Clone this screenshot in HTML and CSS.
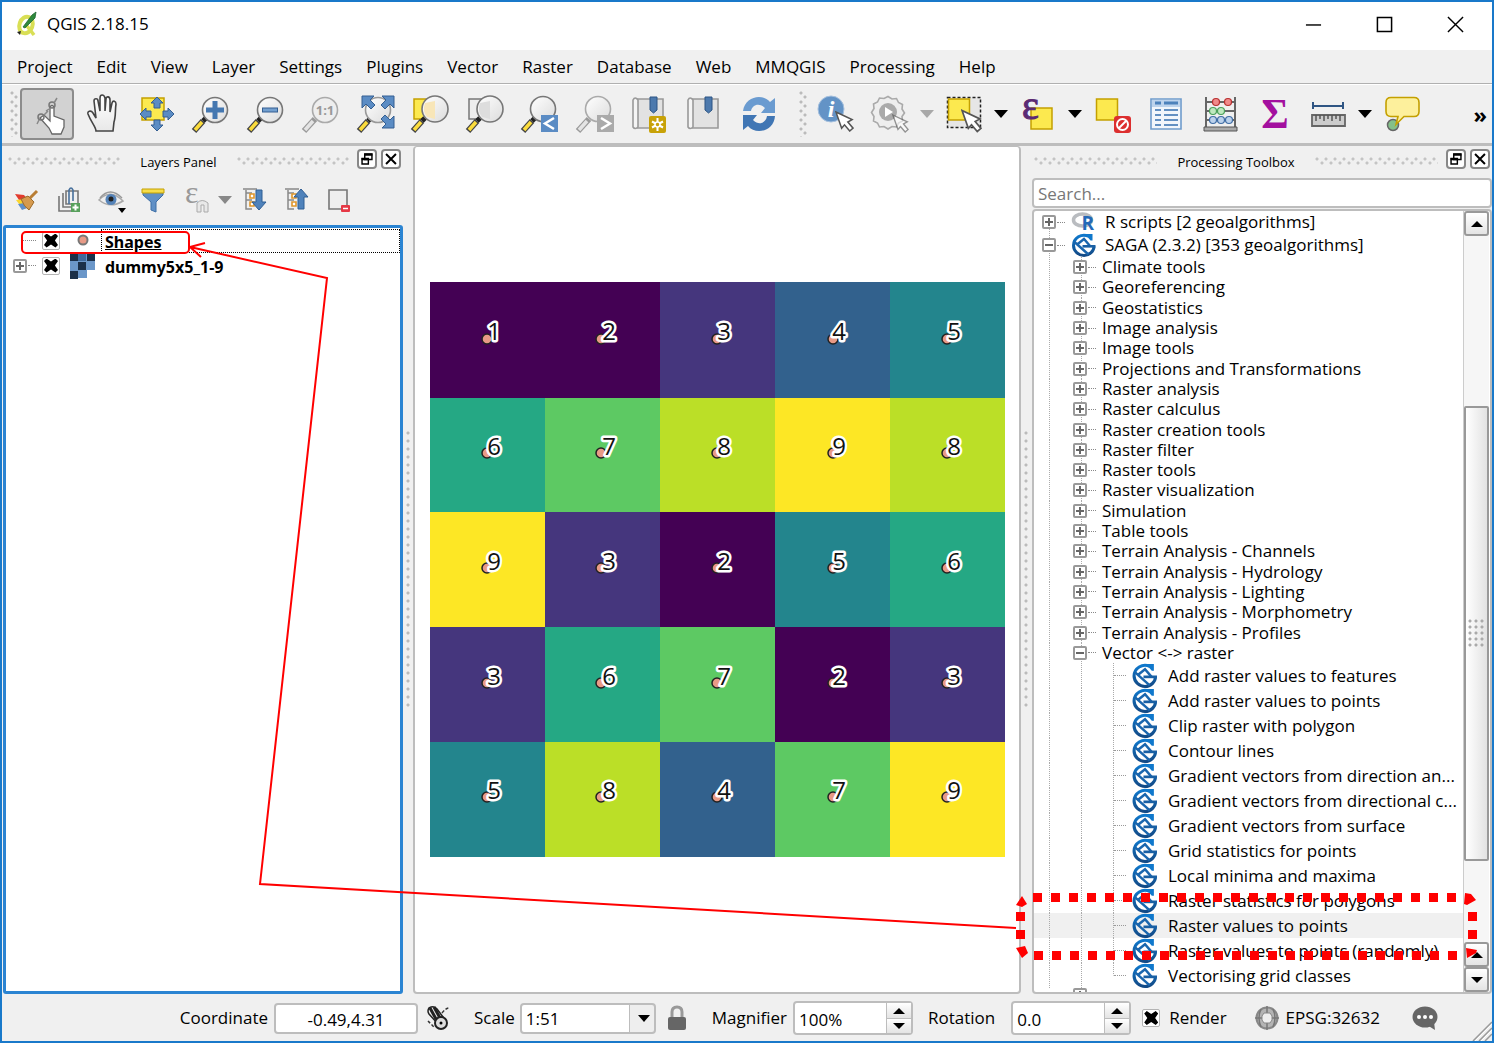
FILE: index.html
```html
<!DOCTYPE html>
<html lang="en">
<head>
<meta charset="utf-8">
<title>QGIS 2.18.15</title>
<link rel="stylesheet" href="styles.css">
</head>
<body>
<svg class="defs" width="0" height="0" aria-hidden="true">
  <defs>
    <linearGradient id="lens" x1="0" y1="0" x2="1" y2="1"><stop offset="0" stop-color="#fff"/><stop offset="1" stop-color="#dcdcdc"/></linearGradient>
    <linearGradient id="sagaBlue" x1="0" y1="0" x2="0" y2="1"><stop offset="0" stop-color="#0f78cc"/><stop offset="1" stop-color="#134a86"/></linearGradient>
    <linearGradient id="skin" x1="0" y1="0" x2="0" y2="1"><stop offset="0" stop-color="#fff"/><stop offset="1" stop-color="#e8e8e8"/></linearGradient>
  </defs>
  <symbol id="saga" viewBox="0 0 24 24">
    <path d="M17 3.200C10 0 2 5 2 12.500C2 18 7 22.500 12.500 22.500S22.500 18 22.500 13.500" fill="none" stroke="url(#sagaBlue)" stroke-width="3"/>
    <path d="M13 1h8v6.500h-2l-3-3.500z" fill="#0f78cc"/>
    <path d="M3 9L17 21.500M5 12L12.500 6L19 13.500" fill="none" stroke="#1a66ae" stroke-width="2.400"/>
    <path d="M11 13.300H24" stroke="#1a60a4" stroke-width="2.600"/>
  </symbol>
  <symbol id="handle" viewBox="0 0 40 40">
    <path d="M12 27L3 37" stroke="#444" stroke-width="6"/><path d="M11 28L4 36" stroke="#fbdc3c" stroke-width="3.500"/>
    <path d="M15 24l-3 3" stroke="#222" stroke-width="5"/>
  </symbol>
  <symbol id="handle-off" viewBox="0 0 40 40">
    <path d="M14 25L3 37" stroke="#9a9a9a" stroke-width="6"/><path d="M12 27L4 36" stroke="#e4e4e4" stroke-width="3.500"/>
  </symbol>
  <symbol id="cursor" viewBox="0 0 20 22">
    <path d="M1 1L18 9L13.500 11.500L19 18L15.500 21L10 14.500L7 18Z" fill="#fff" stroke="#555" stroke-width="1.600"/>
  </symbol>
  <symbol id="book" viewBox="0 0 40 40">
    <path d="M8 5H34V34H8z" fill="#e2e2e2" stroke="#999" stroke-width="1.600"/>
    <path d="M4 6q2-4 5 0V33q-3 3-5 0z" fill="#f4f4f4" stroke="#999" stroke-width="1.600"/>
    <path d="M21 3h7v13l-3.500 3L21 16z" fill="#4c79ad" stroke="#2c5584"/>
  </symbol>
  <symbol id="float" viewBox="0 0 20 20"><path d="M7.500 4.500h8v6h-8zM4.500 9.500h7v6h-7z" fill="#fff" stroke="#000" stroke-width="1.600"/><path d="M7 5h9M4 10h8" stroke="#000" stroke-width="2.500"/></symbol>
  <symbol id="close" viewBox="0 0 20 20"><path d="M4.500 4.500l11 11m0-11l-11 11" stroke="#000" stroke-width="2.200"/></symbol>
  <symbol id="tree-lines" viewBox="0 0 28 28">
    <path d="M5 4v19h6M5 7h6M5 14h6" fill="none" stroke="#888" stroke-width="1.500"/><path d="M2 3h14" stroke="#888" stroke-width="1.500"/>
    <path d="M9 8h4v4H9zM9 16h4v4H9z" fill="#fff" stroke="#e0962a" stroke-width="1.600"/>
  </symbol>
</svg>

<div class="window">
  <header class="titlebar">
    <svg class="logo" viewBox="0 0 22 26"><ellipse cx="10" cy="14" rx="6.500" ry="8.500" fill="none" stroke="#d9df55" stroke-width="4" transform="rotate(20 10 14)"/><path d="M11 15l7 9" stroke="#d9df55" stroke-width="3.500"/><path d="M7 16L16 4l4-3-1 6L9 17z" fill="#2f8a3c" stroke="#1d6430" stroke-width=".8"/><path d="M1 21l4-1-1 4z" fill="#222"/></svg>
    <h1>QGIS 2.18.15</h1>
    <div class="winbuttons">
      <button aria-label="Minimize"><svg viewBox="0 0 18 18"><path d="M1 9.500h16" stroke="#000" stroke-width="1.500"/></svg></button>
      <button aria-label="Maximize"><svg viewBox="0 0 18 18"><path d="M1.500 1.500h15v15h-15z" fill="none" stroke="#000" stroke-width="1.600"/></svg></button>
      <button aria-label="Close"><svg viewBox="0 0 18 18"><path d="M1 1l16 16M17 1L1 17" stroke="#000" stroke-width="1.500"/></svg></button>
    </div>
  </header>

  <nav class="menubar">
    <button>Project</button><button>Edit</button><button>View</button><button>Layer</button><button>Settings</button><button>Plugins</button><button>Vector</button><button>Raster</button><button>Database</button><button>Web</button><button>MMQGIS</button><button>Processing</button><button>Help</button>
  </nav>

  <div class="toolbar">
    <span class="grip-v"></span>
    <div class="tools nav-tools">
      <button class="pressed" aria-label="Touch zoom and pan"><svg viewBox="0 0 40 40"><path d="M13 24l4-3 6 6V13q2-3 4 0v9l10 4v7l-3 7H25l-3-6z" fill="#fff" stroke="#666" stroke-width="1.300"/><circle cx="25" cy="11" r="3" fill="none" stroke="#777" stroke-width="1.500"/><circle cx="14" cy="23" r="3" fill="none" stroke="#777" stroke-width="1.500"/><path d="M27 9l3-5M22 15l-3 2M12 26l-2 4M17 21l4-4" stroke="#888" stroke-width="1.500"/></svg></button>
      <button aria-label="Pan map"><svg viewBox="0 0 40 40"><path d="M14 37c0-4-5-9-8-17-1-3 3-4 5-1l3 5-2-17c0-3 4-3 4 0l2 10V4c0-4 4-4 5 0v13l1-12c0-3 4-3 4 1l0 12 2-9c1-3 4-2 4 1-1 6 0 12-2 18l-1 9z" fill="url(#skin)" stroke="#444" stroke-width="1.600"/></svg></button>
      <button aria-label="Pan map to selection"><svg viewBox="0 0 40 40"><path d="M5 4h22v22H5z" fill="#fce94f" stroke="#c4a000" stroke-width="1.500"/><path d="M20 3l6 6h-3v5h-6V9h-3zM20 37l6-6h-3v-5h-6v5h-3zM3 20l6-6v3h5v6H9v3zM37 20l-6-6v3h-5v6h5v3z" fill="#5b8cc4" stroke="#345f92"/></svg></button>
      <button aria-label="Zoom in"><svg viewBox="0 0 40 40"><use href="#handle"/><circle cx="24" cy="16" r="12.500" fill="url(#lens)" stroke="#777" stroke-width="1.600"/><path d="M24 7v18M15 16h18" stroke="#4477b0" stroke-width="5"/></svg></button>
      <button aria-label="Zoom out"><svg viewBox="0 0 40 40"><use href="#handle"/><circle cx="24" cy="16" r="12.500" fill="url(#lens)" stroke="#777" stroke-width="1.600"/><path d="M16 16h16" stroke="#345f92" stroke-width="5"/><path d="M17 16h14" stroke="#729fcf" stroke-width="3"/></svg></button>
      <button aria-label="Zoom to native resolution"><svg viewBox="0 0 40 40"><use href="#handle-off"/><circle cx="24" cy="16" r="12.500" fill="#eee" stroke="#aaa" stroke-width="1.600"/><text x="24" y="21" class="ratio">1:1</text></svg></button>
      <button aria-label="Zoom full"><svg viewBox="0 0 40 40"><use href="#handle"/><circle cx="22" cy="16" r="12.500" fill="url(#lens)" stroke="#999" stroke-width="1.600"/><path d="M6 2h12l-4 4 5 5-4 4-5-5-4 4zM38 2H26l4 4-5 5 4 4 5-5 4 4zM38 34H26l4-4-5-5 4-4 5 5 4-4z" fill="#5b8cc4" stroke="#345f92"/></svg></button>
      <button aria-label="Zoom to selection"><svg viewBox="0 0 40 40"><path d="M4 5h15v20H4z" fill="#fce94f" stroke="#c4a000" stroke-width="1.500"/><use href="#handle"/><circle cx="25" cy="15" r="13" fill="url(#lens)" stroke="#777" stroke-width="1.600"/><path d="M15 9l10-2v18l-8-2q-5-6-2-14z" fill="#f8e6b8"/></svg></button>
      <button aria-label="Zoom to layer"><svg viewBox="0 0 40 40"><path d="M4 5h15v20H4z" fill="#eee" stroke="#777" stroke-width="1.500"/><use href="#handle"/><circle cx="25" cy="15" r="13" fill="url(#lens)" stroke="#777" stroke-width="1.600"/><path d="M15 9l10-2v18l-8-2q-5-6-2-14z" fill="#ddd"/></svg></button>
      <button aria-label="Zoom last"><svg viewBox="0 0 40 40"><use href="#handle"/><circle cx="23" cy="15" r="12.500" fill="url(#lens)" stroke="#777" stroke-width="1.600"/><path d="M21 21h17v17H21z" fill="#5b8cc4"/><path d="M34 24l-9 5.500 9 5.500" fill="none" stroke="#fff" stroke-width="2.500"/></svg></button>
      <button aria-label="Zoom next"><svg viewBox="0 0 40 40"><use href="#handle-off"/><circle cx="23" cy="15" r="12.500" fill="url(#lens)" stroke="#aaa" stroke-width="1.600"/><path d="M22 21h17v17H22z" fill="#aaa"/><path d="M26 24l9 5.500-9 5.500" fill="none" stroke="#fff" stroke-width="2.500"/></svg></button>
      <button aria-label="New bookmark"><svg viewBox="0 0 40 40"><use href="#book"/><rect x="20" y="22" width="17" height="17" rx="2" fill="#c8a208"/><path d="M28.500 24v13M23 27.500l11 6M34 27.500l-11 6" stroke="#fff" stroke-width="2"/><circle cx="28.500" cy="30.500" r="2.500" fill="#c8a208" stroke="#fff" stroke-width="1.500"/></svg></button>
      <button aria-label="Show bookmarks"><svg viewBox="0 0 40 40"><use href="#book"/></svg></button>
      <button aria-label="Refresh"><svg viewBox="0 0 40 40"><path d="M4 17C6 2 24-1 31 8l5-4v15H22l4-5C20 8 13 11 12 17z" fill="#6a9bd0"/><path d="M36 22C35 38 16 41 9 32l-5 4V21h14l-4 5c6 6 13 3 14-4z" fill="#4076b4"/></svg></button>
    </div>
    <span class="grip-v"></span>
    <div class="tools">
      <button aria-label="Identify features"><svg viewBox="0 0 40 40"><circle cx="15" cy="15" r="13" fill="#6393c6" stroke="#a5c0de"/><text x="15" y="23" class="info">i</text><use href="#cursor" x="19" y="17" width="19" height="21"/></svg></button>
      <button aria-label="Run feature action"><svg viewBox="0 0 40 40"><path d="M18 2.500l4 2.500 4.500-.5 2 4 4 2-.5 4.500 2.500 4-2.500 3.500.5 4.500-4 2-2 4-4.500-.5-4 2.500-4-2.500-4.500.5-2-4-4-2 .5-4.500L1.500 18.500l2.500-4-.5-4.500 4-2 2-4 4.500.5z" fill="#eee" stroke="#aaa" stroke-width="1.600"/><circle cx="18" cy="18" r="9" fill="#aaa"/><path d="M15 13l8 5-8 5z" fill="#fff"/><use href="#cursor" x="22" y="20" width="17" height="19" opacity=".6"/></svg></button>
      <button class="more off" aria-label="Action options"></button>
      <button aria-label="Select features"><svg viewBox="0 0 40 40"><path d="M3.500 3.500h33v30h-33z" fill="#e6e6e6" stroke="#222" stroke-width="1.500" stroke-dasharray="3 2"/><path d="M4.500 5h21v21h-21z" fill="#fce94f" stroke="#c4a000" stroke-width="1.500"/><use href="#cursor" x="17" y="15" width="21" height="24"/></svg></button>
      <button class="more" aria-label="Select options"></button>
      <button aria-label="Select by expression"><svg viewBox="0 0 40 40"><path d="M13 14h21v21H13z" fill="#fce94f" stroke="#c4a000" stroke-width="1.500"/><text x="4" y="25" class="epsilon">ε</text></svg></button>
      <button class="more" aria-label="Expression options"></button>
      <button aria-label="Deselect all"><svg viewBox="0 0 40 40"><path d="M4.500 5h21v21h-21z" fill="#fce94f" stroke="#c4a000" stroke-width="1.500"/><rect x="22" y="22" width="17" height="17" rx="3" fill="#dc2f2f"/><circle cx="30.500" cy="30.500" r="5.500" fill="none" stroke="#fff" stroke-width="2"/><path d="M27 34l7-7" stroke="#fff" stroke-width="2"/></svg></button>
      <button aria-label="Open attribute table"><svg viewBox="0 0 40 40"><path d="M5 5h30v30H5z" fill="#f2f6fb" stroke="#6f9ccc" stroke-width="1.600"/><path d="M6 6h28v7H6z" fill="#bdd3ec"/><path d="M9 9h6M18 9h14" stroke="#4d82bb" stroke-width="3"/><path d="M9 16h6M18 16h14M9 21h6M18 21h14M9 26h6M18 26h14M9 31h6M18 31h14" stroke="#6390c2" stroke-width="1.800"/></svg></button>
      <button aria-label="Field calculator"><svg viewBox="0 0 40 40"><path d="M6 3v30M35 3v30M6 8h29M6 17h29M6 26h29" stroke="#666" stroke-width="2"/><path d="M4 33h33v4H4z" fill="#aaa" stroke="#555"/><g stroke-width="1.200"><g fill="#f08a8a" stroke="#b83030"><circle cx="16" cy="8" r="3.500"/><circle cx="28" cy="8" r="3.500"/></g><g fill="#bfe8bf" stroke="#4aa05a"><circle cx="13" cy="17" r="3.500"/><circle cx="21" cy="17" r="3.500"/></g><g fill="#bcd2ec" stroke="#3f6da5"><circle cx="13" cy="26" r="3.500"/><circle cx="21" cy="26" r="3.500"/><circle cx="29" cy="26" r="3.500"/></g></g></svg></button>
      <button aria-label="Show statistical summary"><svg viewBox="0 0 40 40"><text x="21" y="34" class="sigma">Σ</text></svg></button>
      <button aria-label="Measure line"><svg viewBox="0 0 40 40"><path d="M5 12h30M5 8v7M35 8v7" stroke="#2f5583" stroke-width="2"/><path d="M4 21h33v11H4z" fill="#ccc" stroke="#666" stroke-width="1.800"/><path d="M8 21v6M12 21v4M16 21v6M20 21v4M24 21v6M28 21v4M32 21v6" stroke="#555" stroke-width="1.500"/></svg></button>
      <button class="more" aria-label="Measure options"></button>
      <button aria-label="Map tips"><svg viewBox="0 0 40 40"><circle cx="11" cy="31" r="5.500" fill="#84c08a" stroke="#666" stroke-width="1.500"/><path d="M9 3.500h23q5 0 5 5v9q0 5-5 5H22l-8 8 2-8H9q-5 0-5-5v-9q0-5 5-5z" fill="#fdf09c" stroke="#c4a000" stroke-width="1.600"/></svg></button>
    </div>
    <button class="overflow" aria-label="More tools">»</button>
  </div>

  <main class="workspace">
    <section class="dock">
      <div class="dock-title"><span class="grip-h"></span><h2>Layers Panel</h2><span class="grip-h"></span>
        <div class="dock-buttons"><button aria-label="Float panel"><svg><use href="#float"/></svg></button><button aria-label="Close panel"><svg><use href="#close"/></svg></button></div></div>
      <div class="layer-tools">
        <button aria-label="Layer styling"><svg viewBox="0 0 28 28"><path d="M2 8l9 1 5 6-4 8z" fill="#e23b2e"/><path d="M3 14l8-1 5 5-6 5z" fill="#fbd62e"/><path d="M5 18l7-1 2 5-5 2z" fill="#5f8fca"/><path d="M8 13l7-3 6 6-5 8q-5-3-8-11z" fill="#d69a4e" stroke="#9b6a2a"/><path d="M17 12L24 5" stroke="#b87d34" stroke-width="3"/></svg></button>
        <button aria-label="Add group"><svg viewBox="0 0 28 28"><path d="M4 10v15h14M8 7v14h13M11 5h12v13H11z" fill="none" stroke="#777" stroke-width="1.600"/><path d="M14 18V4q2-4 4 0v11" fill="none" stroke="#48709c" stroke-width="1.600"/><path d="M16 17h9v9h-9z" fill="#58a05c"/><path d="M20.500 18.500v6M17.500 21.500h6" stroke="#fff" stroke-width="2"/></svg></button>
        <button aria-label="Manage visibility"><svg viewBox="0 0 28 28"><path d="M2 14Q13 2 26 15Q13 23 2 14z" fill="#eee" stroke="#aaa" stroke-width="1.500"/><path d="M3 12Q13 0 25 12" fill="none" stroke="#999" stroke-width="1.500"/><circle cx="14" cy="13.500" r="5.500" fill="#5583b8"/><circle cx="14" cy="13" r="2.500" fill="#222"/><path d="M21 22h8l-4 5z" fill="#000"/></svg></button>
        <button aria-label="Filter legend"><svg viewBox="0 0 28 28"><path d="M4 6h20v3l-7 7v10l-5-2v-8L4 9z" fill="#6090c6" stroke="#3d6ea6"/><path d="M3 3h22v4H3z" fill="#f6dd4a" stroke="#c4a000"/></svg></button>
        <button aria-label="Filter by expression"><svg viewBox="0 0 28 28"><text x="4" y="17" class="epsilon small">ε</text><path d="M16 26v-9q5-5 11 0v9h-4v-7h-3v7z" fill="#e8e8e8" stroke="#aaa"/></svg></button>
        <button class="more grey" aria-label="Filter options"></button>
        <button aria-label="Expand all"><svg viewBox="0 0 28 28"><use href="#tree-lines"/><path d="M15 4h6v12h4l-7 8-7-8h4z" fill="#4f82bb" stroke="#2f5e94"/></svg></button>
        <button aria-label="Collapse all"><svg viewBox="0 0 28 28"><use href="#tree-lines"/><path d="M15 23h6V11h4l-7-8-7 8h4z" fill="#4f82bb" stroke="#2f5e94"/></svg></button>
        <button aria-label="Remove layer"><svg viewBox="0 0 28 28"><path d="M4 4h18v19H4z" fill="#eee" stroke="#777" stroke-width="1.600"/><rect x="16" y="19" width="9" height="7" rx="1" fill="#e63946"/><path d="M18 22.500h5" stroke="#fff" stroke-width="1.500"/></svg></button>
      </div>
      <ul class="layers">
        <li><span class="twig blank"></span><input type="checkbox" id="l1" checked><svg class="sym" viewBox="0 0 26 26"><circle cx="14" cy="12" r="4.500" fill="#e89a86" stroke="#777" stroke-width="2"/></svg><label for="l1" class="current">Shapes</label></li>
        <li><span class="twig"><i class="box plus"></i></span><input type="checkbox" id="l2" checked><svg class="sym" viewBox="0 0 26 26"><path d="M1 1h25v16h-8v8H1z" fill="#6b97c9"/><path d="M1 1h8v7H1zM18 1h8v7h-8zM9 9h8v8H9zM1 18h8v8H1z" fill="#1b3049"/><path d="M9 1h8v7H9z" fill="#3f6a9c"/></svg><label for="l2">dummy5x5_1-9</label></li>
      </ul>
    </section>

    <span class="splitter"></span>

    <section class="canvas">
      <svg class="raster" viewBox="0 0 575 575" role="img" aria-label="Raster cells with point values">
        <g shape-rendering="crispEdges">
          <path fill="#440154" d="M0 0h230v116H0zM230 230h115v115H230zM345 345h115v115H345z"/>
          <path fill="#45367d" d="M230 0h115v116H230zM115 230h115v115H115zM0 345h115v115H0zM460 345h115v115H460z"/>
          <path fill="#32618d" d="M345 0h115v116H345zM230 460h115v115H230z"/>
          <path fill="#23858d" d="M460 0h115v116H460zM345 230h115v115H345zM0 460h115v115H0z"/>
          <path fill="#25a884" d="M0 116h115v114H0zM460 230h115v115H460zM115 345h115v115H115z"/>
          <path fill="#5dc963" d="M115 116h115v114H115zM230 345h115v115H230zM345 460h115v115H345z"/>
          <path fill="#bbdf27" d="M230 116h115v114H230zM460 116h115v114H460zM115 460h115v115H115z"/>
          <path fill="#fde725" d="M345 116h115v114H345zM0 230h115v115H0zM460 460h115v115H460z"/>
        </g>
        <g fill="#e89a86" stroke="#222" stroke-width="1.500">
          <circle cx="57" cy="57" r="5"/><circle cx="171" cy="57" r="5"/><circle cx="287" cy="57" r="5"/><circle cx="403" cy="57" r="5"/><circle cx="517" cy="57" r="5"/>
          <circle cx="57" cy="171" r="5"/><circle cx="171" cy="171" r="5"/><circle cx="287" cy="171" r="5"/><circle cx="403" cy="171" r="5"/><circle cx="517" cy="171" r="5"/>
          <circle cx="57" cy="286" r="5"/><circle cx="171" cy="286" r="5"/><circle cx="287" cy="286" r="5"/><circle cx="403" cy="286" r="5"/><circle cx="517" cy="286" r="5"/>
          <circle cx="57" cy="401" r="5"/><circle cx="171" cy="401" r="5"/><circle cx="287" cy="401" r="5"/><circle cx="403" cy="401" r="5"/><circle cx="517" cy="401" r="5"/>
          <circle cx="57" cy="515" r="5"/><circle cx="171" cy="515" r="5"/><circle cx="287" cy="515" r="5"/><circle cx="403" cy="515" r="5"/><circle cx="517" cy="515" r="5"/>
        </g>
        <g class="values">
          <text x="64" y="58">1</text><text x="179" y="58">2</text><text x="294" y="58">3</text><text x="409" y="58">4</text><text x="524" y="58">5</text>
          <text x="64" y="173">6</text><text x="179" y="173">7</text><text x="294" y="173">8</text><text x="409" y="173">9</text><text x="524" y="173">8</text>
          <text x="64" y="288">9</text><text x="179" y="288">3</text><text x="294" y="288">2</text><text x="409" y="288">5</text><text x="524" y="288">6</text>
          <text x="64" y="403">3</text><text x="179" y="403">6</text><text x="294" y="403">7</text><text x="409" y="403">2</text><text x="524" y="403">3</text>
          <text x="64" y="517">5</text><text x="179" y="517">8</text><text x="294" y="517">4</text><text x="409" y="517">7</text><text x="524" y="517">9</text>
        </g>
      </svg>
    </section>

    <span class="splitter"></span>

    <section class="dock">
      <div class="dock-title"><span class="grip-h"></span><h2>Processing Toolbox</h2><span class="grip-h"></span>
        <div class="dock-buttons"><button aria-label="Float panel"><svg><use href="#float"/></svg></button><button aria-label="Close panel"><svg><use href="#close"/></svg></button></div></div>
      <input class="search" type="text" placeholder="Search..." aria-label="Search algorithms">
      <div class="toolbox">
        <ul class="tree">
          <li class="provider first"><span class="twig"><i class="box plus"></i></span><svg viewBox="0 0 24 24"><ellipse cx="11" cy="10" rx="9" ry="6" fill="none" stroke="#b9bcc0" stroke-width="3.500"/><text x="10" y="20" class="r-logo">R</text></svg>R scripts [2 geoalgorithms]</li>
          <li class="provider"><span class="twig"><i class="box"></i></span><svg><use href="#saga"/></svg>SAGA (2.3.2) [353 geoalgorithms]</li>
          <li><ul class="groups">
            <li><span class="twig"><i class="box plus"></i></span>Climate tools</li>
            <li><span class="twig"><i class="box plus"></i></span>Georeferencing</li>
            <li><span class="twig"><i class="box plus"></i></span>Geostatistics</li>
            <li><span class="twig"><i class="box plus"></i></span>Image analysis</li>
            <li><span class="twig"><i class="box plus"></i></span>Image tools</li>
            <li><span class="twig"><i class="box plus"></i></span>Projections and Transformations</li>
            <li><span class="twig"><i class="box plus"></i></span>Raster analysis</li>
            <li><span class="twig"><i class="box plus"></i></span>Raster calculus</li>
            <li><span class="twig"><i class="box plus"></i></span>Raster creation tools</li>
            <li><span class="twig"><i class="box plus"></i></span>Raster filter</li>
            <li><span class="twig"><i class="box plus"></i></span>Raster tools</li>
            <li><span class="twig"><i class="box plus"></i></span>Raster visualization</li>
            <li><span class="twig"><i class="box plus"></i></span>Simulation</li>
            <li><span class="twig"><i class="box plus"></i></span>Table tools</li>
            <li><span class="twig"><i class="box plus"></i></span>Terrain Analysis - Channels</li>
            <li><span class="twig"><i class="box plus"></i></span>Terrain Analysis - Hydrology</li>
            <li><span class="twig"><i class="box plus"></i></span>Terrain Analysis - Lighting</li>
            <li><span class="twig"><i class="box plus"></i></span>Terrain Analysis - Morphometry</li>
            <li><span class="twig"><i class="box plus"></i></span>Terrain Analysis - Profiles</li>
            <li><span class="twig"><i class="box"></i></span>Vector &lt;-&gt; raster</li>
          </ul></li>
          <li class="alg"><svg><use href="#saga"/></svg><span>Add raster values to features</span></li>
          <li class="alg"><svg><use href="#saga"/></svg><span>Add raster values to points</span></li>
          <li class="alg"><svg><use href="#saga"/></svg><span>Clip raster with polygon</span></li>
          <li class="alg"><svg><use href="#saga"/></svg><span>Contour lines</span></li>
          <li class="alg"><svg><use href="#saga"/></svg><span>Gradient vectors from direction an...</span></li>
          <li class="alg"><svg><use href="#saga"/></svg><span>Gradient vectors from directional c...</span></li>
          <li class="alg"><svg><use href="#saga"/></svg><span>Gradient vectors from surface</span></li>
          <li class="alg"><svg><use href="#saga"/></svg><span>Grid statistics for points</span></li>
          <li class="alg"><svg><use href="#saga"/></svg><span>Local minima and maxima</span></li>
          <li class="alg"><svg><use href="#saga"/></svg><span>Raster statistics for polygons</span></li>
          <li class="alg hover"><svg><use href="#saga"/></svg><span>Raster values to points</span></li>
          <li class="alg"><svg><use href="#saga"/></svg><span>Raster values to points (randomly)</span></li>
          <li class="alg last"><svg><use href="#saga"/></svg><span>Vectorising grid classes</span></li>
          <li class="next"><i class="box plus"></i></li>
        </ul>
        <div class="scrollbar">
          <button class="up" aria-label="Scroll up"></button>
          <div class="track"><div class="thumb"><i></i></div></div>
          <button class="up" aria-label="Page up"></button>
          <button class="down" aria-label="Scroll down"></button>
        </div>
      </div>
    </section>
  </main>

  <footer class="status">
    <div class="field"><label for="coord">Coordinate</label><input class="coord" id="coord" type="text" value="-0.49,4.31"></div>
    <button class="extents" aria-label="Toggle extents"><svg viewBox="0 0 28 28"><path d="M4 4q5-3 8 1l6 8-6 6-8-9q-2-3 0-6z" fill="#eee" stroke="#222" stroke-width="1.500"/><path d="M5 4l6 11M9 3l6 11" stroke="#222" stroke-width="3"/><circle cx="16" cy="19" r="6" fill="#ddd" stroke="#222" stroke-width="2"/><circle cx="16" cy="19" r="1.500"/><path d="M17 9q4-5 7-5M3 17l6 6" fill="none" stroke="#333" stroke-width="1.500" stroke-dasharray="3 2"/></svg></button>
    <div class="field scale"><label for="scale">Scale</label><select id="scale"><option>1:51</option></select></div>
    <button class="lock" aria-label="Lock scale"><svg viewBox="0 0 20 26"><path d="M5 13V7q0-5 5-5t5 5v6" fill="none" stroke="#999" stroke-width="3"/><rect x="1" y="12" width="18" height="13" rx="2" fill="#666"/></svg></button>
    <div class="field mag"><label for="mag">Magnifier</label><div class="spin"><input id="mag" type="text" value="100%"><button class="up" aria-label="Increase magnifier"></button><button class="down" aria-label="Decrease magnifier"></button></div></div>
    <div class="field rot"><label for="rot">Rotation</label><div class="spin"><input id="rot" type="text" value="0.0"><button class="up" aria-label="Increase rotation"></button><button class="down" aria-label="Decrease rotation"></button></div></div>
    <div class="field render"><input type="checkbox" id="render" checked><label for="render">Render</label></div>
    <button class="crs"><svg viewBox="0 0 26 26"><circle cx="13" cy="13" r="10.500" fill="#b4b4b4" stroke="#888" stroke-width="2"/><path d="M13 1v24M1 13h24M7 4q-4 9 0 18M19 4q4 9 0 18" fill="none" stroke="#777" stroke-width="1.500"/><path d="M10 8h6l2 3v4l-2 3h-6l-2-3v-4z" fill="#eee" stroke="#888"/></svg>EPSG:32632</button>
    <button class="messages" aria-label="Messages"><svg viewBox="0 0 28 26"><ellipse cx="13" cy="12" rx="12.500" ry="10.500" fill="#666"/><path d="M15 20l8 5-1-8z" fill="#666"/><circle cx="7" cy="12" r="2" fill="#fff"/><circle cx="13" cy="12" r="2" fill="#fff"/><circle cx="19" cy="12" r="2" fill="#fff"/></svg></button>
    <svg class="sizegrip" viewBox="0 0 20 20"><path d="M1 20L20 1M7 20L20 7M13 20L20 13" stroke="#999" stroke-width="1.500"/><path d="M3 20L20 3M9 20L20 9" stroke="#fff"/></svg>
  </footer>

  <svg class="annotation" width="1494" height="1043" viewBox="0 0 1494 1043" aria-hidden="true">
    <g fill="none" stroke="#f00" stroke-width="2">
      <rect x="22" y="232" width="167" height="21" rx="4"/>
      <path d="M1016 928L260 884L327 278L190 247M205 243L190 247L201 257"/>
      <path d="M1033 897.500H1457M1034 955.500H1460" stroke-width="9" stroke-dasharray="9 9"/>
    </g>
    <path fill="#f00" d="M1016 912h9v9h-9zM1016 930h9v9h-9zM1468 912h9v9h-9zM1468 930h9v9h-9zM1016 905L1022 896L1027 904L1022 907zM1016 948L1022 958L1028 953L1025 946zM1465 893L1471 894L1476 900L1467 905L1464 904zM1466 948L1477 950L1476 953L1467 958z"/>
  </svg>
</div>
</body>
</html>
```
FILE: styles.css
```css
* { box-sizing: border-box; }
body { margin: 0; font: 17px/20px "Open Sans", "Noto Sans", sans-serif; color: #000; }
button, input, select { font: inherit; color: inherit; margin: 0; }
button { border: 0; padding: 0; background: none; display: flex; align-items: center; justify-content: center; }
ul { list-style: none; margin: 0; padding: 0; }
h1, h2 { margin: 0; font-weight: 400; }
svg { display: block; flex: none; overflow: visible; }
.defs { position: absolute; }

.window { position: relative; display: flex; flex-direction: column; height: 100vh; border: 2px solid #1979ca; background: #f0f0f0; overflow: hidden; }

.titlebar { display: flex; align-items: center; height: 48px; flex: none; padding: 0 1px 4px 14px; background: #fff; }
.titlebar h1 { font-size: 17px; line-height: 24px; margin-left: 9px; flex: 1; }
.logo { width: 22px; height: 26px; }
.winbuttons { display: flex; }
.winbuttons button { width: 71px; height: 44px; }
.winbuttons svg { width: 17px; height: 17px; }

.menubar { display: flex; gap: 24px; height: 34px; flex: none; padding-left: 15px; border-bottom: 1px solid #b0b0b0; }

.toolbar { display: flex; align-items: center; height: 62px; flex: none; padding: 0 5px 0 8px; border-top: 1px solid #fff; border-bottom: 3px solid #bdbdbd; }
.tools { display: flex; }
.tools button { width: 54px; height: 52px; }
.tools svg { width: 40px; height: 40px; }
.nav-tools { width: 766px; margin-right: 13px; justify-content: space-between; }
.tools .pressed { border: 2px solid #8c8c8c; border-radius: 4px; background: #d2d2d2; }
.more::before, .up::before, .down::before { content: ""; border: 7px solid transparent; border-bottom-width: 0; border-top: 8px solid #000; }
.tools .more, .layer-tools .more { width: 20px; }
.more.off::before { border-top-color: #a8a8a8; }
.more.grey::before { border-top-color: #888; }
.overflow { margin-left: auto; font-size: 22px; font-weight: 700; }
.grip-v { width: 8px; height: 46px; flex: none; margin-right: 2px; background: radial-gradient(circle at 2px 2px, #bbb 1px, transparent 2px) 0 0 / 9px 9px, radial-gradient(circle at 2px 2px, #bbb 1px, transparent 2px) 4px 4px / 9px 9px; }
.grip-h { flex: 1; height: 8px; background: radial-gradient(circle at 2px 2px, #c4c4c4 1px, transparent 2px) 0 0 / 9px 9px, radial-gradient(circle at 2px 2px, #c4c4c4 1px, transparent 2px) 5px 4px / 9px 9px; }
.ratio { font: 700 13px "Open Sans", sans-serif; text-anchor: middle; fill: #999; }
.info { font: italic 700 24px "Liberation Serif", serif; text-anchor: middle; fill: #fff; }
.epsilon { font: 40px "Liberation Serif", serif; fill: #5b2a73; stroke: #5b2a73; }
.epsilon.small { font-size: 32px; fill: #999; stroke: none; }
.sigma { font: 700 42px "Liberation Serif", serif; text-anchor: middle; fill: #a3109f; }
.r-logo { font: 700 19px "Open Sans", sans-serif; fill: #2369b8; }

.workspace { flex: 1; min-height: 0; display: grid; grid-template-columns: 401px 10px minmax(0, 1fr) 11px 460px; }
.dock { display: flex; flex-direction: column; min-width: 0; min-height: 0; padding: 0 0 1px 1px; }
.dock-title { display: flex; align-items: center; height: 30px; flex: none; padding: 0 2px 0 5px; }
.dock-title h2 { font-size: 13px; line-height: 20px; margin: 2px 20px 0; }
.dock-buttons { display: flex; gap: 4px; margin-left: 8px; padding-bottom: 4px; }
.dock-buttons button { width: 20px; height: 20px; border: 2px solid #888; border-radius: 4px; background: #fff; }
.dock-buttons svg { width: 18px; height: 18px; }
.layer-tools { display: flex; height: 49px; flex: none; padding: 0 0 1px 3px; align-items: center; }
.layer-tools button { width: 42px; height: 32px; }
.layer-tools .more { width: 18px; }
.layer-tools svg { width: 28px; height: 28px; }

.layers { flex: 1; border: 3px solid #2b84d2; border-radius: 3px; background: #fff; font: 700 16px/20px "Noto Sans", "Open Sans", sans-serif; }
.layers li { display: flex; align-items: center; height: 25px; padding-left: 7px; }
.layers .twig { width: 29px; }
.layers label { flex: 1; height: 24px; line-height: 24px; margin-left: 6px; padding-left: 3px; border: 1px solid transparent; }
.layers .current { border: 1px dotted #000; text-decoration: underline; }
.sym { width: 26px; height: 26px; margin-left: 9px; }

.twig { display: flex; align-items: center; width: 24px; flex: none; }
.twig::after { content: ""; width: 8px; border-top: 1px dotted #888; margin-left: 1px; }
.twig.blank::after { margin-left: 9px; width: 14px; }
.box { width: 14px; height: 14px; flex: none; border: 2px solid #999; border-radius: 2px; background: linear-gradient(#666, #666) center / 8px 2px no-repeat, #fff; }
.box.plus { background: linear-gradient(#666, #666) center / 8px 2px no-repeat, linear-gradient(#666, #666) center / 2px 8px no-repeat, #fff; }

input[type="checkbox"] { appearance: none; width: 18px; height: 18px; flex: none; border: 1px solid #b4b4b4; border-radius: 2px; background: #fff; display: grid; place-items: center; }
input[type="checkbox"]:checked::before { content: ""; width: 14px; height: 14px; background: #000; clip-path: polygon(0 18%, 18% 0, 50% 22%, 82% 0, 100% 18%, 78% 50%, 100% 82%, 82% 100%, 50% 78%, 18% 100%, 0 82%, 22% 50%); }

.splitter { background: radial-gradient(circle at 2px 2px, #bbb 1px, transparent 2px) center / 5px 8px repeat-y; align-self: center; height: 280px; width: 6px; justify-self: center; }
.canvas { display: grid; place-items: center; min-width: 0; border: 2px solid #bdbdbd; border-top-width: 1px; border-radius: 4px; margin-bottom: 1px; background: #fff; }
.raster { width: 575px; max-width: 100%; }
.values { font: 24px "Open Sans", sans-serif; text-anchor: middle; fill: #111; stroke: #fff; stroke-width: 5px; stroke-linejoin: round; paint-order: stroke; }

.search { height: 30px; flex: none; margin-top: 2px; padding: 0 4px; border: 2px solid #bdbdbd; border-radius: 4px; background: #fff; }
.dock:last-child { padding-left: 0; }
.dock:last-child .dock-title { padding-left: 2px; }
.search::placeholder { color: #777; opacity: 1; }
.toolbox { flex: 1; min-height: 0; display: flex; margin-top: 1px; border: 2px solid #bdbdbd; border-radius: 4px; background: #fff; }
.tree { flex: 1; min-width: 0; overflow: hidden; white-space: nowrap; }
.provider, .groups li, .alg { --dots: repeating-linear-gradient(#aaa 0 1px, transparent 1px 2px); display: flex; align-items: center; }
.provider { height: 24px; padding-left: 8px; background: var(--dots) 15px 0 / 1px 100% no-repeat; }
.provider.first { height: 22px; background-position: 15px 12px; }
.provider svg { width: 25px; height: 24px; margin: 0 9px 0 5px; }
.groups { height: 406px; display: grid; grid-template-rows: repeat(20, 1fr); }
.groups li { min-height: 0; padding-left: 39px; background: var(--dots) 15px 0 / 1px 100% no-repeat, var(--dots) 47px 0 / 1px 100% no-repeat; }
.groups .twig { width: 29px; }
.alg { height: 25px; padding-left: 80px; background: var(--dots) 15px 0 / 1px 100% no-repeat, var(--dots) 47px 0 / 1px 100% no-repeat, var(--dots) 79px 0 / 1px 100% no-repeat; }
.alg::before { content: ""; width: 12px; border-top: 1px dotted #999; margin-right: 6px; }
.alg.hover { background-color: #f0f0f0; }
.alg.last { background-size: 1px 100%, 1px 100%, 1px 50%; }
.alg svg { width: 25px; height: 25px; margin-right: 11px; }
.next { display: flex; padding-left: 39px; }

.scrollbar { width: 26px; display: flex; flex-direction: column; margin-right: 1px; border-left: 1px solid #ccc; background: #f6f6f6; }
.scrollbar button { height: 25px; border: 2px solid #999; border-radius: 3px; background: linear-gradient(#fff, #e4e4e4); }
.up::before { transform: rotate(180deg); }
.up::before, .down::before { border-width: 6px 6px 0; }
.track { flex: 1; padding: 170px 0 81px; display: flex; }
.thumb { flex: 1; display: grid; place-items: center; border: 2px solid #999; border-radius: 2px; background: linear-gradient(90deg, #fff, #e2e2e2); }
.thumb i { width: 18px; height: 30px; background: radial-gradient(circle at 2px 2px, #aaa 1px, transparent 2px) 0 0 / 6px 6px; }

.status { position: relative; display: flex; align-items: center; justify-content: flex-end; height: 46px; flex: none; padding-right: 52px; }
.field { display: flex; align-items: center; gap: 6px; }
.status input[type="text"] { min-width: 0; padding: 2px 4px 0; border: 2px solid #bdbdbd; border-radius: 4px; background: #fff; }
.status .coord { width: 144px; height: 31px; text-align: center; }
.extents { margin: 0 21px 0 7px; }
.extents svg { width: 28px; height: 28px; }
.scale select { appearance: none; width: 136px; height: 31px; padding: 2px 4px 0; border: 2px solid #bdbdbd; border-radius: 4px; background: linear-gradient(90deg, #fff 107px, #bdbdbd 107px 108px, #eee 108px); }
.scale { position: relative; gap: 5px; }
.scale::after { content: ""; position: absolute; right: 6px; top: 12px; border: 6px solid transparent; border-bottom: 0; border-top: 7px solid #000; }
.lock { margin: 0 25px 0 11px; }
.lock svg { width: 20px; height: 26px; }
.spin { display: grid; grid-template: 15px 15px / 1fr 25px; width: 120px; height: 34px; border: 2px solid #bdbdbd; border-radius: 4px; background: #fff; }
.status .spin input { grid-row: 1 / 3; border: 0; padding-top: 4px; }
.spin button { border-left: 1px solid #bdbdbd; background: linear-gradient(#fff, #e4e4e4); }
.spin .down { border-top: 1px solid #bdbdbd; }
.rot { margin-left: 15px; gap: 16px; }
.render { margin-left: 11px; gap: 9px; }
.crs { margin: 0 32px 0 27px; gap: 6px; }
.crs svg { width: 26px; height: 26px; }
.messages svg { width: 28px; height: 26px; }
.sizegrip { position: absolute; right: 0; bottom: 0; width: 20px; height: 20px; }

.annotation { position: absolute; left: -2px; top: -2px; pointer-events: none; }
```
